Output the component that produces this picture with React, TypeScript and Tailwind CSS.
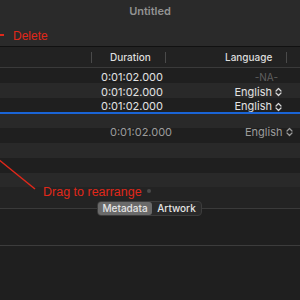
import React from "react";

const F = { fontFamily: "Inter, 'Noto Sans', sans-serif" };
const A = { fontFamily: "'Liberation Sans', Arial, sans-serif" };

function UpDown({ c = "#d8d8d8" }: { c?: string }) {
  return (
    <svg width="7" height="10" viewBox="0 0 7 10" className="ml-[3px]">
      <path d="M1 4 L3.5 1.5 L6 4" fill="none" stroke={c} strokeWidth="1.2" strokeLinecap="round" strokeLinejoin="round" />
      <path d="M1 6 L3.5 8.5 L6 6" fill="none" stroke={c} strokeWidth="1.2" strokeLinecap="round" strokeLinejoin="round" />
    </svg>
  );
}

function Row({ bg, h, lang }: { bg: string; h: string; lang?: "na" | "en" }) {
  return (
    <div className={`flex ${bg} ${h} items-center text-[11px] text-[#e2e2e2] pt-[3px]`}>
      <div className="w-[92px]" />
      <div className="w-[74px] flex justify-end pr-[3px]">0:01:02.000</div>
      <div className="w-[121px] flex justify-end items-center pr-[5px]">
        {lang === "na" && <span className="text-[#5f5f5f] text-[10px] pr-[4px]">-NA-</span>}
        {lang === "en" && (
          <>
            <span>English</span>
            <UpDown />
          </>
        )}
      </div>
    </div>
  );
}

export default function App() {
  return (
    <div className="w-[300px] h-[300px] bg-[#1f1f1f] overflow-hidden relative" style={F}>
      {/* title + toolbar */}
      <div className="h-[46px] bg-[#2a2a2a] relative">
        <div className="h-[22px] flex items-center justify-center text-[11px] font-semibold text-[#939393]">Untitled</div>
        <div className="absolute left-[13px] top-[27px] text-[12px] text-[#e0281a]" style={A}>Delete</div>
        <div className="absolute left-0 top-[34px] w-[4px] h-[1.5px] bg-[#e0281a]" />
      </div>
      <div className="h-[1px] bg-[#111111]" />
      {/* header */}
      <div className="flex h-[20px] bg-[#222222] items-center text-[10px] font-medium text-[#dedede]">
        <div className="w-[92px] h-full flex justify-end items-center">
          <div className="w-[1px] h-[11px] bg-[#4a4a4a]" />
        </div>
        <div className="w-[74px] h-full flex items-center justify-between">
          <span className="pl-[18px]">Duration</span>
          <div className="w-[1px] h-[11px] bg-[#4a4a4a]" />
        </div>
        <div className="w-[121px] h-full flex items-center justify-between">
          <span className="pl-[59px]">Language</span>
          <div className="w-[1px] h-[11px] bg-[#4a4a4a]" />
        </div>
      </div>
      <div className="h-[1px] bg-[#3a3a3a]" />
      {/* rows */}
      <Row bg="bg-[#1f1f1f]" h="h-[15px]" lang="na" />
      <Row bg="bg-[#292929]" h="h-[15px]" lang="en" />
      <Row bg="bg-[#1f1f1f]" h="h-[14px]" lang="en" />
      <div className="h-[2px] bg-[#1a64d6]" />
      <div className="bg-[#292929] h-[14px]" />
      <div className="bg-[#1f1f1f] h-[15px]" />
      <div className="bg-[#292929] h-[15px]" />
      <div className="bg-[#1f1f1f] h-[15px]" />
      <div className="bg-[#292929] h-[14px]" />
      <div className="bg-[#232323] h-[21px]" />
      <div className="h-[1px] bg-[#3a3a3a]" />
      <div className="h-[36px] bg-[#1f1f1f]" />
      <div className="h-[1px] bg-[#3c3c3c]" />

      {/* drag ghost */}
      <div className="absolute left-[110px] top-[124px] text-[11px] text-[#9c9c9c]">0:01:02.000</div>
      <div className="absolute left-[245px] top-[124px] flex items-center text-[11px] text-[#9c9c9c]">
        <span>English</span>
        <UpDown c="#9c9c9c" />
      </div>

      {/* annotation */}
      <svg className="absolute left-0 top-0" width="300" height="300">
        <line x1="-2" y1="159" x2="35" y2="189" stroke="#e0281a" strokeWidth="1.5" />
        <circle cx="149" cy="191" r="2" fill="#4a4a4a" />
      </svg>
      <div className="absolute left-[43px] top-[183px] text-[12.5px] text-[#e0281a]" style={A}>Drag to rearrange</div>

      {/* segmented control */}
      <div className="absolute left-[97px] top-[201px] w-[105px] h-[15px] rounded-[4px] bg-[#2a2a2a] border border-[#3c3c3c] flex items-center text-[10px] font-medium text-[#e4e4e4]">
        <div className="w-[54px] h-full rounded-[3px] bg-[#6a6a6a] flex items-center justify-center">Metadata</div>
        <div className="flex-1 flex items-center justify-center">Artwork</div>
      </div>
    </div>
  );
}
